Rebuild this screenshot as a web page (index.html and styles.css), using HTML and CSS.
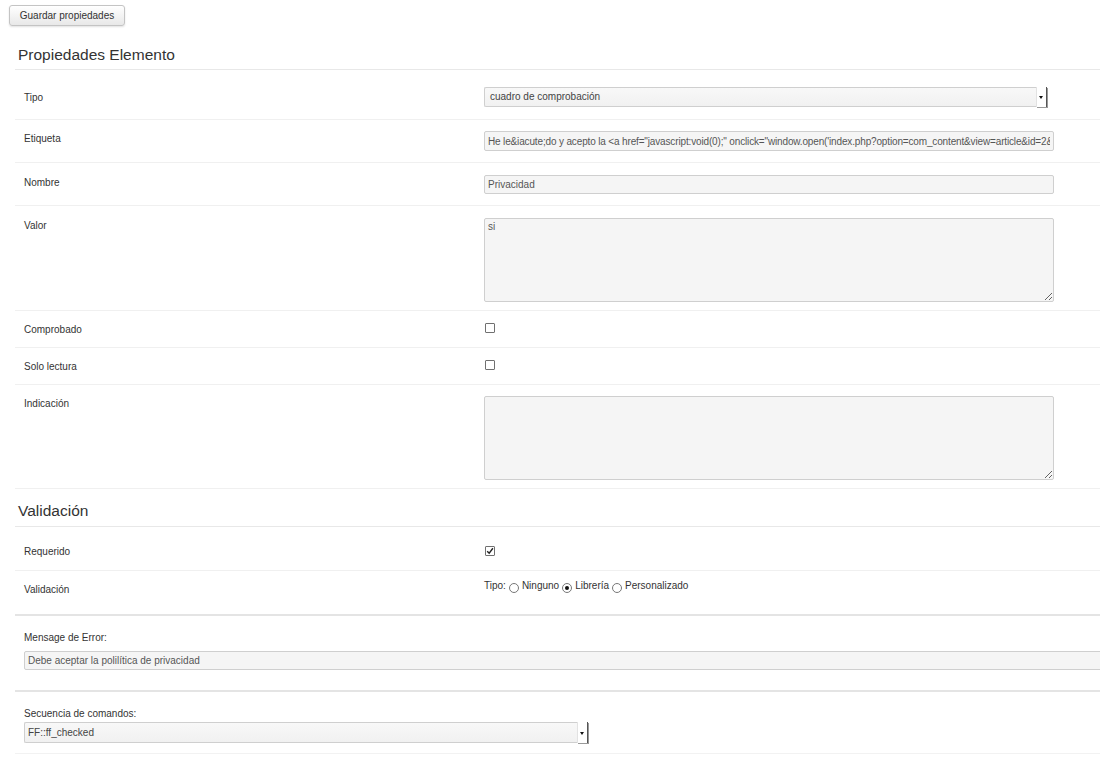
FILE: index.html
```html
<!DOCTYPE html>
<html lang="es">
<head>
<meta charset="utf-8">
<title>Propiedades Elemento</title>
<link rel="stylesheet" href="styles.css">
</head>
<body>
<div class="page">
  <div class="toolbar"><button class="btn" type="button">Guardar propiedades</button></div>

  <section class="section">
    <h2 class="section-title">Propiedades Elemento</h2>

    <div class="row row-first">
      <div class="label">Tipo</div>
      <div class="control">
        <div class="select select-wide"><span class="select-text">cuadro de comprobación</span><span class="select-arrow"></span></div>
      </div>
    </div>

    <div class="row">
      <div class="label">Etiqueta</div>
      <div class="control"><input class="text-input tight" type="text" value="He le&amp;iacute;do y acepto la &lt;a href=&quot;javascript:void(0);&quot; onclick=&quot;window.open('index.php?option=com_content&amp;view=article&amp;id=2&amp;Itemid=1','Privacidad')&quot;&gt;política de privacidad&lt;/a&gt;"></div>
    </div>

    <div class="row row-short">
      <div class="label">Nombre</div>
      <div class="control"><input class="text-input short" type="text" value="Privacidad"></div>
    </div>

    <div class="row row-area">
      <div class="label">Valor</div>
      <div class="control"><textarea class="area">si</textarea></div>
    </div>

    <div class="row row-check">
      <div class="label">Comprobado</div>
      <div class="control"><span class="check"></span></div>
    </div>

    <div class="row row-check">
      <div class="label">Solo lectura</div>
      <div class="control"><span class="check"></span></div>
    </div>

    <div class="row row-area row-last-area">
      <div class="label">Indicación</div>
      <div class="control"><textarea class="area"></textarea></div>
    </div>
  </section>

  <section class="section section-validation">
    <h2 class="section-title">Validación</h2>

    <div class="row row-required">
      <div class="label">Requerido</div>
      <div class="control"><span class="check checked"><svg viewBox="0 0 10 10" width="8" height="8"><path d="M1.5 5.2 L4 7.8 L8.6 1.6" fill="none" stroke="#222" stroke-width="1.7"/></svg></span></div>
    </div>

    <div class="row row-noline">
      <div class="label">Validación</div>
      <div class="control">
        <div class="radios">
          <span>Tipo:</span>
          <span class="radio"></span><span>Ninguno</span>
          <span class="radio on"></span><span>Librería</span>
          <span class="radio"></span><span>Personalizado</span>
        </div>
      </div>
    </div>
  </section>

  <div class="block block-error">
    <div class="block-label">Mensage de Error:</div>
    <input class="text-input full" type="text" value="Debe aceptar la polilítica de privacidad">
  </div>

  <div class="block block-script">
    <div class="block-label">Secuencia de comandos:</div>
    <div class="select select-mid"><span class="select-text">FF::ff_checked</span><span class="select-arrow"></span></div>
  </div>
</div>
</body>
</html>
```

FILE: styles.css
```css
html, body {
  margin: 0;
  padding: 0;
  background: #fff;
  overflow: hidden;
}

body {
  font-family: "Liberation Sans", Arial, Helvetica, sans-serif;
  font-size: 10px;
  color: #333;
  width: 1100px;
}

.page {
  padding: 5px 0 0 0;
}

.toolbar {
  padding-left: 9px;
}

.btn {
  font-family: "Liberation Sans", Arial, sans-serif;
  font-size: 10px;
  color: #333;
  height: 21px;
  width: 116px;
  padding: 0;
  border: 1px solid #c4c4c4;
  border-radius: 3px;
  background: linear-gradient(#ffffff, #e8e8e8);
  box-shadow: 0 1px 2px rgba(0, 0, 0, 0.12);
}

.section {
  margin-left: 15px;
}

.section-title {
  margin: 0;
  font-weight: normal;
  font-size: 15.5px;
  line-height: 20px;
  color: #333;
  padding: 0 0 4px 3px;
  border-bottom: 1px solid #e8e8e8;
}

.section > .section-title {
  margin-top: 19px;
}

.section-validation > .section-title {
  margin-top: 12px;
  padding-bottom: 5px;
}

.row {
  display: grid;
  grid-template-columns: 469px 1fr;
  padding: 11px 0;
  border-bottom: 1px solid #f0f0f0;
}

.section-title + .row {
  margin-top: 6px;
}

.row-first {
  padding-top: 11px;
  padding-bottom: 12px;
}

.row-first .label {
  padding-top: 3px;
}

.row-short {
  padding-top: 12px;
  padding-bottom: 11px;
}

.row-area {
  padding-top: 12px;
  padding-bottom: 8px;
}

.row-last-area {
  padding-top: 11px;
  padding-bottom: 8px;
}

.row-check {
  padding-top: 10px;
  padding-bottom: 9px;
}

.row-check .label {
  padding-top: 1px;
}

.row-required {
  padding-bottom: 10px;
}

.row-noline {
  border-bottom: none;
  padding-bottom: 16px;
}

.label {
  padding-left: 9px;
  line-height: 16px;
  color: #333;
}

.control {
  display: flex;
  align-items: flex-start;
}

.text-input {
  box-sizing: border-box;
  width: 570px;
  height: 20px;
  padding: 0 3px;
  font-family: "Liberation Sans", Arial, sans-serif;
  font-size: 10px;
  color: #555;
  background: #f5f5f5;
  border: 1px solid #cfcfcf;
  border-radius: 2px;
  margin: 0;
  outline: none;
}

.text-input.tight {
  letter-spacing: -0.15px;
}

.text-input.short {
  height: 19px;
}

.area {
  box-sizing: border-box;
  width: 570px;
  height: 84px;
  padding: 2px 3px;
  margin: 0;
  font-family: "Liberation Sans", Arial, sans-serif;
  font-size: 10px;
  color: #555;
  background: #f5f5f5;
  border: 1px solid #cfcfcf;
  border-radius: 2px;
  resize: both;
  display: block;
}

.select {
  box-sizing: border-box;
  display: flex;
  align-items: stretch;
  height: 20px;
  background: linear-gradient(#f8f8f8, #f1f1f1);
  border: 1px solid #cfcfcf;
  border-right: none;
  border-radius: 2px 0 0 2px;
}

.select-wide {
  width: 563px;
}

.select-mid {
  width: 564px;
  height: 21px;
}

.select-text {
  flex: 1;
  padding-left: 5px;
  line-height: 18px;
  color: #444;
  white-space: nowrap;
  overflow: hidden;
}

.select-mid .select-text {
  padding-left: 3px;
  line-height: 19px;
}

.select-arrow {
  position: relative;
  width: 9px;
  margin-top: -1px;
  margin-bottom: -1px;
  background: #fff;
  border-left: 1px solid #e2e2e2;
  border-right: 1px solid #555;
  box-shadow: 1px 1px 0 #999;
}

.select-arrow::after {
  content: "";
  position: absolute;
  left: 2px;
  top: 50%;
  margin-top: -1px;
  border-left: 2.5px solid transparent;
  border-right: 2.5px solid transparent;
  border-top: 3px solid #111;
}

.check {
  box-sizing: border-box;
  display: inline-flex;
  align-items: center;
  justify-content: center;
  width: 10px;
  height: 10px;
  margin: 2px 0 0 1px;
  border: 1px solid #707070;
  border-radius: 1px;
  background: #fff;
}

.check.checked {
  margin-top: 2px;
}

.radios {
  display: flex;
  align-items: center;
  gap: 3px;
  margin-top: -4px;
  line-height: 14px;
  color: #333;
}

.radio {
  box-sizing: border-box;
  display: inline-block;
  width: 10px;
  height: 10px;
  margin-top: 5px;
  border: 1px solid #777;
  border-radius: 50%;
  background: #fff;
  position: relative;
}

.radio.on::after {
  content: "";
  position: absolute;
  left: 2px;
  top: 2px;
  width: 4px;
  height: 4px;
  border-radius: 50%;
  background: #111;
}

.block {
  margin-left: 15px;
  padding-left: 9px;
  border-top: 2px solid #e4e4e4;
}

.block-error {
  padding-top: 15px;
  padding-bottom: 20px;
}

.block-script {
  padding-top: 15px;
  padding-bottom: 10px;
  border-bottom: 1px solid #f2f2f2;
}

.block-label {
  line-height: 14px;
  margin-bottom: 6px;
}

.block-script .block-label {
  margin-bottom: 1px;
}

.text-input.full {
  width: 1090px;
  height: 19px;
}
```
